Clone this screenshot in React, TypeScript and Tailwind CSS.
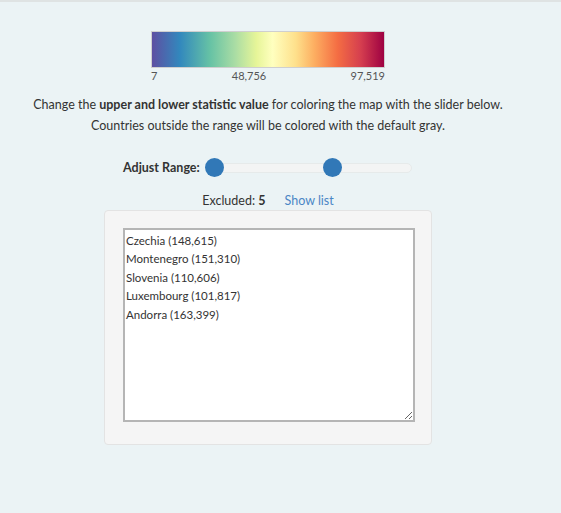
import React from "react";

const excluded = [
  { name: "Czechia", value: 148615 },
  { name: "Montenegro", value: 151310 },
  { name: "Slovenia", value: 110606 },
  { name: "Luxembourg", value: 101817 },
  { name: "Andorra", value: 163399 },
];

const fmt = (n: number) => n.toLocaleString("en-US");

const App: React.FC = () => {
  const listText = excluded.map((c) => `${c.name} (${fmt(c.value)})`).join("\n");

  return (
    <div
      className="min-h-[513px] w-full bg-[#ebf3f5] border-t-2 border-[#dfe3e3] text-[#333]"
      style={{ fontFamily: "Lato, 'Open Sans', sans-serif" }}
    >
      <div className="w-[536px]">
        {/* legend */}
        <div className="flex flex-col items-center pt-[29px]">
          <div className="w-[234px]">
            <div className="h-[37px] border border-[#cfcfcf] bg-[linear-gradient(to_right,#5e4fa2_0%,#3288bd_12%,#66c2a5_25%,#abdda4_36%,#e6f598_45%,#ffffbf_52%,#fee08b_62%,#fdae61_70%,#f46d43_80%,#d53e4f_90%,#9e0142_100%)]" />
            <div className="flex justify-between text-[11px] leading-[14px] text-[#555] mt-[1px]">
              <span>7</span>
              <span className="-ml-[10px]">48,756</span>
              <span>97,519</span>
            </div>
          </div>
        </div>

        {/* description */}
        <p className="mt-[11px] text-center text-[12.5px] leading-[21px]">
          Change the <b>upper and lower statistic value</b> for coloring the map with the slider below.
          <br />
          Countries outside the range will be colored with the default gray.
        </p>

        {/* range slider */}
        <div className="mt-[23px] flex items-center pl-[123px]">
          <span className="text-[12.5px] font-bold">Adjust Range:</span>
          <div className="relative ml-[13px] h-[10px] w-[199px] rounded-full border border-[#e6eaea] bg-[#f3f4f4]">
            <div className="absolute left-[-9px] top-[-6px] h-[19px] w-[19px] rounded-full bg-[#3178b7]" />
            <div className="absolute left-[109px] top-[-6px] h-[19px] w-[19px] rounded-full bg-[#3178b7]" />
          </div>
        </div>

        <div className="mt-[14px] flex justify-center gap-[19px] text-[12.5px] leading-[18px]">
          <span>
            Excluded: <b>{excluded.length}</b>
          </span>
          <a className="text-[#4a86c5] cursor-pointer">Show list</a>
        </div>

        {/* excluded list */}
        <div className="ml-[104px] w-[328px] rounded-[4px] border border-[#e3e3e3] bg-[#f5f5f5] px-[18px] pt-[17px] pb-[22px]">
          <textarea
            readOnly
            value={listText}
            className="block h-[194px] w-[292px] resize border-2 border-[#b5b5b5] bg-white px-[1px] pt-[2px] pb-0 text-[11.5px] leading-[18.5px] text-[#333] outline-none"
            style={{ fontFamily: "Lato, 'Open Sans', sans-serif" }}
          />
        </div>
      </div>
    </div>
  );
};

export default App;
